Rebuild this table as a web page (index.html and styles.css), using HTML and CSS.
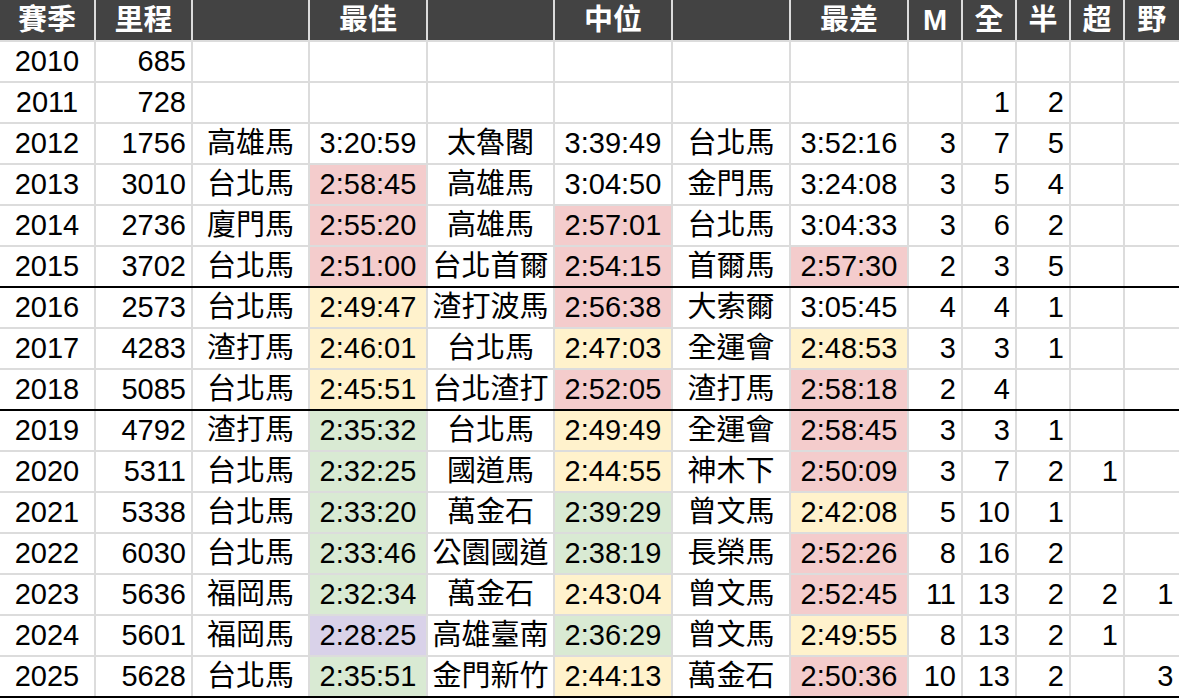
FILE: index.html
```html
<!DOCTYPE html>
<html lang="zh-Hant">
<head>
<meta charset="utf-8">
<title>賽季紀錄</title>
<link rel="stylesheet" href="styles.css">
</head>
<body>
<table class="sheet">
  <colgroup>
    <col class="w-year"><col class="w-dist"><col class="w-race"><col class="w-time">
    <col class="w-race2"><col class="w-time"><col class="w-time"><col class="w-time">
    <col class="w-n"><col class="w-n"><col class="w-n"><col class="w-n"><col class="w-last">
  </colgroup>
  <thead>
    <tr class="head">
      <th>賽季</th><th>里程</th><th></th><th>最佳</th><th></th><th>中位</th><th></th><th>最差</th><th>M</th><th>全</th><th>半</th><th>超</th><th>野</th>
    </tr>
  </thead>
  <tbody>
    <tr><td class="c">2010</td><td class="r">685</td><td></td><td></td><td></td><td></td><td></td><td></td><td></td><td></td><td></td><td></td><td class="last"></td></tr>
    <tr><td class="c">2011</td><td class="r">728</td><td></td><td></td><td></td><td></td><td></td><td></td><td></td><td class="r">1</td><td class="r">2</td><td></td><td class="last"></td></tr>
    <tr><td class="c">2012</td><td class="r">1756</td><td class="c">高雄馬</td><td class="c">3:20:59</td><td class="c">太魯閣</td><td class="c">3:39:49</td><td class="c">台北馬</td><td class="c">3:52:16</td><td class="r">3</td><td class="r">7</td><td class="r">5</td><td></td><td class="last"></td></tr>
    <tr><td class="c">2013</td><td class="r">3010</td><td class="c">台北馬</td><td class="c red">2:58:45</td><td class="c">高雄馬</td><td class="c">3:04:50</td><td class="c">金門馬</td><td class="c">3:24:08</td><td class="r">3</td><td class="r">5</td><td class="r">4</td><td></td><td class="last"></td></tr>
    <tr><td class="c">2014</td><td class="r">2736</td><td class="c">廈門馬</td><td class="c red">2:55:20</td><td class="c">高雄馬</td><td class="c red">2:57:01</td><td class="c">台北馬</td><td class="c">3:04:33</td><td class="r">3</td><td class="r">6</td><td class="r">2</td><td></td><td class="last"></td></tr>
    <tr class="pre"><td class="c">2015</td><td class="r">3702</td><td class="c">台北馬</td><td class="c red">2:51:00</td><td class="c">台北首爾</td><td class="c red">2:54:15</td><td class="c">首爾馬</td><td class="c red">2:57:30</td><td class="r">2</td><td class="r">3</td><td class="r">5</td><td></td><td class="last"></td></tr>
    <tr class="sep"><td class="c">2016</td><td class="r">2573</td><td class="c">台北馬</td><td class="c yel">2:49:47</td><td class="c">渣打波馬</td><td class="c red">2:56:38</td><td class="c">大索爾</td><td class="c">3:05:45</td><td class="r">4</td><td class="r">4</td><td class="r">1</td><td></td><td class="last"></td></tr>
    <tr><td class="c">2017</td><td class="r">4283</td><td class="c">渣打馬</td><td class="c yel">2:46:01</td><td class="c">台北馬</td><td class="c yel">2:47:03</td><td class="c">全運會</td><td class="c yel">2:48:53</td><td class="r">3</td><td class="r">3</td><td class="r">1</td><td></td><td class="last"></td></tr>
    <tr class="pre"><td class="c">2018</td><td class="r">5085</td><td class="c">台北馬</td><td class="c yel">2:45:51</td><td class="c">台北渣打</td><td class="c red">2:52:05</td><td class="c">渣打馬</td><td class="c red">2:58:18</td><td class="r">2</td><td class="r">4</td><td></td><td></td><td class="last"></td></tr>
    <tr class="sep"><td class="c">2019</td><td class="r">4792</td><td class="c">渣打馬</td><td class="c grn">2:35:32</td><td class="c">台北馬</td><td class="c yel">2:49:49</td><td class="c">全運會</td><td class="c red">2:58:45</td><td class="r">3</td><td class="r">3</td><td class="r">1</td><td></td><td class="last"></td></tr>
    <tr><td class="c">2020</td><td class="r">5311</td><td class="c">台北馬</td><td class="c grn">2:32:25</td><td class="c">國道馬</td><td class="c yel">2:44:55</td><td class="c">神木下</td><td class="c red">2:50:09</td><td class="r">3</td><td class="r">7</td><td class="r">2</td><td class="r">1</td><td class="last"></td></tr>
    <tr><td class="c">2021</td><td class="r">5338</td><td class="c">台北馬</td><td class="c grn">2:33:20</td><td class="c">萬金石</td><td class="c grn">2:39:29</td><td class="c">曾文馬</td><td class="c yel">2:42:08</td><td class="r">5</td><td class="r">10</td><td class="r">1</td><td></td><td class="last"></td></tr>
    <tr><td class="c">2022</td><td class="r">6030</td><td class="c">台北馬</td><td class="c grn">2:33:46</td><td class="c">公園國道</td><td class="c grn">2:38:19</td><td class="c">長榮馬</td><td class="c red">2:52:26</td><td class="r">8</td><td class="r">16</td><td class="r">2</td><td></td><td class="last"></td></tr>
    <tr><td class="c">2023</td><td class="r">5636</td><td class="c">福岡馬</td><td class="c grn">2:32:34</td><td class="c">萬金石</td><td class="c yel">2:43:04</td><td class="c">曾文馬</td><td class="c red">2:52:45</td><td class="r">11</td><td class="r">13</td><td class="r">2</td><td class="r">2</td><td class="r last">1</td></tr>
    <tr><td class="c">2024</td><td class="r">5601</td><td class="c">福岡馬</td><td class="c pur">2:28:25</td><td class="c">高雄臺南</td><td class="c grn">2:36:29</td><td class="c">曾文馬</td><td class="c yel">2:49:55</td><td class="r">8</td><td class="r">13</td><td class="r">2</td><td class="r">1</td><td class="last"></td></tr>
    <tr class="end"><td class="c">2025</td><td class="r">5628</td><td class="c">台北馬</td><td class="c grn">2:35:51</td><td class="c">金門新竹</td><td class="c yel">2:44:13</td><td class="c">萬金石</td><td class="c red">2:50:36</td><td class="r">10</td><td class="r">13</td><td class="r">2</td><td></td><td class="r last">3</td></tr>
  </tbody>
</table>
</body>
</html>
```

FILE: styles.css
```css
html, body {
  margin: 0;
  padding: 0;
  background: #ffffff;
}

.sheet {
  border-collapse: collapse;
  table-layout: fixed;
  width: 1179px;
  font-family: "Liberation Sans", "Noto Sans CJK TC", sans-serif;
  font-size: 29px;
  color: #000;
}

.w-year { width: 95px; }
.w-dist { width: 97px; }
.w-race { width: 117px; }
.w-time { width: 118px; }
.w-race2 { width: 127px; }
.w-n { width: 54px; }
.w-last { width: 56px; }

.sheet th,
.sheet td {
  border: 2px solid #dcdcdc;
  padding: 0 5px;
  white-space: nowrap;
  overflow: hidden;
  vertical-align: middle;
  line-height: 1;
}

.sheet td:first-child,
.sheet th:first-child {
  border-left: 0;
}

.head th {
  background: #434343;
  color: #ffffff;
  font-weight: bold;
  font-size: 29px;
  height: 40px;
  text-align: center;
  padding: 0;
  border-top: 0;
}

.sheet tbody tr {
  height: 41px;
}

.sheet tbody td {
  height: 39px;
}

.c { text-align: center; }
.r { text-align: right; }

.sheet td.c { padding: 0 2px; }

.sheet td.last,
.sheet th:last-child {
  border-right: 3px solid #000;
}

.sheet tr.pre td {
  border-bottom: 2px solid #000;
}

.sheet tr.sep td {
  border-top: 2px solid #000;
}

.sheet tr.end td {
  border-bottom: 3px solid #000;
}

.red { background: #f4cccc; }
.yel { background: #fff2cc; }
.grn { background: #d9ead3; }
.pur { background: #d9d2e9; }
```
